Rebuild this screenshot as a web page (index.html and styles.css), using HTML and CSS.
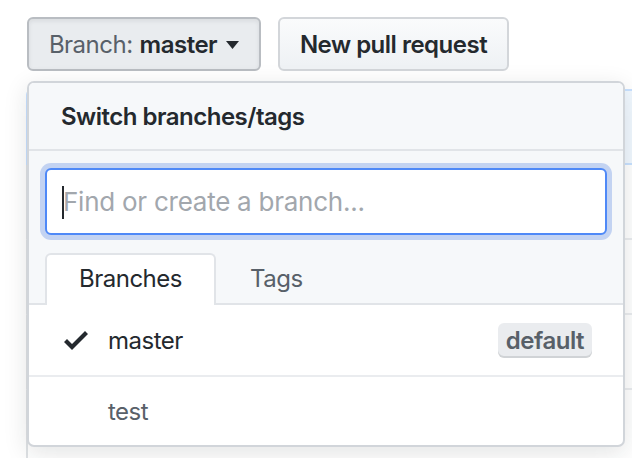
FILE: index.html
```html
<!DOCTYPE html>
<html lang="en">
<head>
<meta charset="utf-8">
<title>Branch selector</title>
<link rel="stylesheet" href="styles.css">
</head>
<body>
<div class="page">
  <div class="toolbar">
    <button class="btn btn-branch" type="button">
      <span class="btn-label">Branch:</span>
      <span class="btn-value">master</span>
      <svg class="caret" width="13" height="8" viewBox="0 0 13 8" aria-hidden="true"><polygon points="0,0 13,0 6.5,8" fill="#24292e"/></svg>
    </button>
    <button class="btn btn-npr" type="button">New pull request</button>
  </div>

  <div class="files">
    <div class="commit-tease"></div>
    <div class="file-row"></div>
    <div class="file-row"></div>
    <div class="file-row"></div>
    <div class="file-row"></div>
  </div>

  <div class="menu">
    <div class="menu-header">Switch branches/tags</div>
    <div class="menu-filter">
      <div class="filter-wrap">
        <input class="filter-input" type="text" placeholder="Find or create a branch...">
        <span class="text-caret"></span>
      </div>
    </div>
    <div class="menu-tabs">
      <span class="tab tab-selected">Branches</span>
      <span class="tab">Tags</span>
    </div>
    <div class="menu-list">
      <div class="item item-selected">
        <svg class="check" width="24" height="32" viewBox="0 0 12 16" aria-hidden="true"><path fill="#24292e" d="M12 5l-8 8-4-4 1.5-1.5L4 10l6.5-6.5L12 5z"/></svg>
        <span class="item-name">master</span>
        <span class="label">default</span>
      </div>
      <div class="item">
        <svg class="check check-hidden" width="24" height="32" viewBox="0 0 12 16" aria-hidden="true"><path fill="#24292e" d="M12 5l-8 8-4-4 1.5-1.5L4 10l6.5-6.5L12 5z"/></svg>
        <span class="item-name">test</span>
      </div>
    </div>
  </div>
</div>
</body>
</html>
```

FILE: styles.css
```css
html, body {
  margin: 0;
  padding: 0;
  background: #ffffff;
  overflow: hidden;
}

body {
  font-family: "Inter", "Noto Sans", "Liberation Sans", sans-serif;
  color: #24292e;
  letter-spacing: -0.5px;
}

.page {
  position: relative;
  width: 632px;
  height: 458px;
  overflow: hidden;
}

/* ---------- toolbar ---------- */
.toolbar {
  display: flex;
  gap: 17px;
  padding: 17px 0 0 27px;
}

.btn {
  box-sizing: border-box;
  height: 54px;
  display: flex;
  align-items: center;
  justify-content: center;
  padding: 0 20px;
  border-radius: 6px;
  font-family: inherit;
  font-size: 24px;
  letter-spacing: -0.5px;
  color: #24292e;
  white-space: nowrap;
  cursor: pointer;
}

.btn-branch {
  width: 234px;
  background: #e9ecef;
  border: 2px solid #b9bdc2;
  box-shadow: inset 0 2px 4px rgba(27, 31, 35, 0.08);
}

.btn-label {
  color: #586069;
  font-weight: 400;
}

.btn-value {
  font-weight: 600;
  margin-left: 7px;
}

.caret {
  flex: none;
  margin-left: 9px;
  margin-top: 2px;
}

.btn-npr {
  width: 231px;
  font-weight: 600;
  background: linear-gradient(180deg, #fafbfc 0%, #eff2f5 90%);
  border: 2px solid #d3d6da;
}

/* ---------- background file table ---------- */
.files {
  margin: 18px 0 0 26px;
  width: 700px;
}

.commit-tease {
  box-sizing: border-box;
  height: 76px;
  background: #f1f8ff;
  border: 2px solid #c8e1ff;
  border-radius: 6px 0 0 0;
}

.file-row {
  height: 73px;
  border-left: 2px solid #dfe2e5;
  border-bottom: 2px solid #eaecef;
}

/* ---------- dropdown menu ---------- */
.menu {
  position: absolute;
  top: 81px;
  left: 27px;
  box-sizing: border-box;
  width: 598px;
  border: 2px solid #d1d5da;
  border-radius: 7px;
  background: #ffffff;
  overflow: hidden;
  box-shadow: 0 6px 24px rgba(27, 31, 35, 0.12);
}

.menu-header {
  height: 66px;
  display: flex;
  align-items: center;
  padding-left: 32px;
  background: #f6f8fa;
  border-bottom: 2px solid #e1e4e8;
  font-size: 24px;
  font-weight: 600;
  color: #24292e;
}

.menu-filter {
  background: #f6f8fa;
  padding: 17px 16px 18px 16px;
}

.filter-wrap {
  position: relative;
}

.filter-input {
  display: block;
  box-sizing: border-box;
  width: 100%;
  height: 67px;
  margin: 0;
  padding: 0 16px;
  font-family: inherit;
  font-size: 26px;
  letter-spacing: -0.25px;
  color: #24292e;
  background: #ffffff;
  border: 2px solid #4f89f7;
  border-radius: 6px;
  box-shadow: 0 0 0 5px #c3d3f2;
  outline: none;
}

.filter-input::placeholder {
  color: #a2a7ad;
}

.text-caret {
  position: absolute;
  left: 17px;
  top: 18px;
  width: 2px;
  height: 33px;
  background: #24292e;
}

.menu-tabs {
  display: flex;
  height: 52px;
  box-sizing: border-box;
  padding-left: 16px;
  background: #f6f8fa;
  border-bottom: 2px solid #e1e4e8;
}

.tab {
  box-sizing: border-box;
  height: 52px;
  padding: 0 32px;
  line-height: 48px;
  font-size: 24px;
  color: #586069;
  border: 2px solid transparent;
  border-bottom: 0;
  border-radius: 6px 6px 0 0;
}

.tab-selected {
  color: #24292e;
  background: #ffffff;
  border-color: #e1e4e8;
}

.item {
  display: flex;
  align-items: center;
  height: 70px;
  box-sizing: border-box;
  padding: 0 31px 0 35px;
  font-size: 24px;
  color: #586069;
}

.item + .item {
  border-top: 2px solid #eaecef;
}

.item-selected {
  color: #24292e;
}

.check {
  flex: none;
  margin-right: 20px;
}

.check-hidden {
  visibility: hidden;
}

.item-name {
  flex: 1;
}

.label {
  box-sizing: border-box;
  height: 35px;
  padding: 0 8px;
  display: flex;
  align-items: center;
  font-size: 24px;
  font-weight: 600;
  color: #586069;
  background: #eaecef;
  border-radius: 6px;
  box-shadow: inset 0 -2px 0 rgba(27, 31, 35, 0.12);
}
```
